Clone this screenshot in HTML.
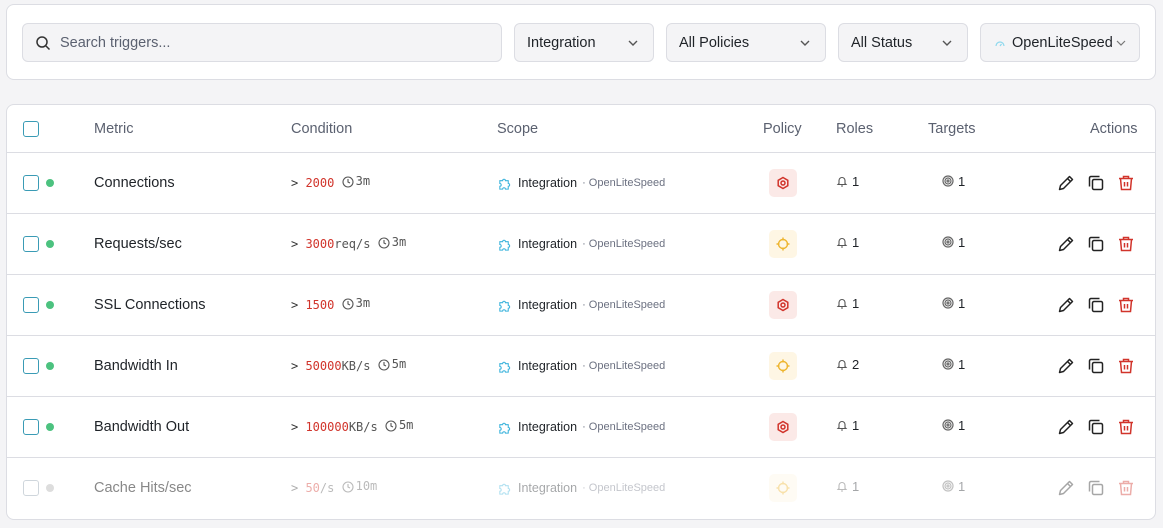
<!DOCTYPE html>
<html><head><style>
*{box-sizing:border-box;margin:0;padding:0}
body{width:1163px;height:528px;background:#f4f4f6;font-family:"Liberation Sans",sans-serif;color:#1f2328;position:relative;overflow:hidden}
svg{flex-shrink:0;display:block}
.card{position:absolute;left:6px;width:1150px;background:#fff;border:1px solid #dcdde3;border-radius:8px}
.f{position:absolute;top:23px;height:39px;background:#f4f4f6;border:1px solid #dcdde3;border-radius:6px;font-size:14.5px;display:flex;align-items:center;padding-left:12px;color:#1f2328}
.chev{position:absolute;right:14px;top:14px}
.row{position:absolute;left:0;width:1148px;height:61px;border-top:1px solid #dcdde3}
.a{position:absolute;top:0;height:100%;display:flex;align-items:center}
.cb{width:16px;height:16px;border:1.5px solid #3a9bb5;border-radius:3px}
.dot{width:8px;height:8px;border-radius:50%;background:#4cc27f}
.th{position:absolute;top:0;height:47px;display:flex;align-items:center;font-size:14.5px;color:#5b6170}
.mono{font-family:"DejaVu Sans Mono",monospace;font-size:12px}
.red{color:#d1342b}
.sub{font-size:11px;color:#6b7080;margin-left:5px}
.badge{width:28px;height:28px;border-radius:5px;display:flex;align-items:center;justify-content:center}
.dim{opacity:.4}
</style></head><body>
<div class="card" style="top:4px;height:76px"></div>
<div class="f" style="left:22px;width:480px;color:#5b6170"><svg width="16" height="16" viewBox="0 0 16 16" fill="none" stroke="#333" stroke-width="1.5" style="margin-right:9px"><circle cx="7" cy="7" r="5"/><path d="M11 11l3.5 3.5"/></svg>Search triggers...</div>
<div class="f" style="left:514px;width:140px">Integration<svg class="chev" width="12" height="10" viewBox="0 0 12 10" fill="none" stroke="#555" stroke-width="1.4"><path d="M2 3l4 4 4-4"/></svg></div>
<div class="f" style="left:666px;width:160px">All Policies<svg class="chev" width="12" height="10" viewBox="0 0 12 10" fill="none" stroke="#555" stroke-width="1.4"><path d="M2 3l4 4 4-4"/></svg></div>
<div class="f" style="left:838px;width:130px">All Status<svg class="chev" width="12" height="10" viewBox="0 0 12 10" fill="none" stroke="#555" stroke-width="1.4"><path d="M2 3l4 4 4-4"/></svg></div>
<div class="f" style="left:980px;width:160px;padding-left:14px"><svg width="10" height="8" viewBox="0 0 10 8" fill="none" stroke="#8ed8ee" stroke-width="1.2" style="margin-right:7px"><path d="M1 7a4 4 0 0 1 8 0M5 7l1.5-2"/></svg>OpenLiteSpeed<svg style="position:absolute;right:12px;top:14px" width="12" height="10" viewBox="0 0 12 10" fill="none" stroke="#777" stroke-width="1.2"><path d="M2 3l4 4 4-4"/></svg></div>

<div class="card" style="top:104px;height:416px">
<div class="th" style="left:16px"><div class="cb"></div></div>
<div class="th" style="left:87px">Metric</div>
<div class="th" style="left:284px">Condition</div>
<div class="th" style="left:490px">Scope</div>
<div class="th" style="left:756px">Policy</div>
<div class="th" style="left:829px">Roles</div>
<div class="th" style="left:921px">Targets</div>
<div class="th" style="left:1083px">Actions</div>
<div id="rows"></div>
</div>
<script>
const R=[["Connections","2000","","3m","r","1"],["Requests/sec","3000","req/s","3m","y","1"],["SSL Connections","1500","","3m","r","1"],["Bandwidth In","50000","KB/s","5m","y","2"],["Bandwidth Out","100000","KB/s","5m","r","1"],["Cache Hits/sec","50","/s","10m","y","1"]];
let h="";
R.forEach((r,i)=>{const last=i==5;const d=last?' dim':'';
const badge=r[4]=="r"?`<div class="badge${d}" style="background:#fbe9e7"><svg width="14" height="14" viewBox="0 0 14 14" fill="none" stroke="#d1342b" stroke-width="1.5"><path d="M7 1.5l4.8 2.8v5.4L7 12.5 2.2 9.7V4.3z"/><circle cx="7" cy="7" r="2"/></svg></div>`:`<div class="badge${d}" style="background:#fef6e4"><svg width="14" height="14" viewBox="0 0 14 14" fill="none" stroke="#eeb52f" stroke-width="1.4"><circle cx="7" cy="7" r="4.5"/><path d="M7 0.5v3M7 10.5v3M0.5 7h3M10.5 7h3"/></svg></div>`;
h+=`<div class="row" style="top:${47+i*61}px">
<div class="a" style="left:16px"><div class="cb" style="${last?'border-color:#cfd6dc':''}"></div></div>
<div class="a" style="left:39px"><div class="dot" style="${last?'background:#ddd':''}"></div></div>
<div class="a" style="left:87px;font-size:14.5px;color:${last?'#888':'#1f2328'}">${r[0]}</div>
<div class="a mono${d}" style="left:284px;color:#333">&gt;&nbsp;<span class="red">${r[1]}</span><span style="color:#555">${r[2]}</span>&nbsp;<svg width="12" height="12" viewBox="0 0 12 12" fill="none" stroke="#555" stroke-width="1.1" style="margin-top:-3px"><circle cx="6" cy="6" r="5"/><path d="M6 3v3l2 1"/></svg><span style="color:#555;margin-left:2px;margin-top:-4px">${r[3]}</span></div>
<div class="a${d}" style="left:490px;font-size:12.5px"><svg width="15" height="15" viewBox="0 0 16 16" fill="none" stroke="#3bb3dc" stroke-width="1.1"><path d="M3 5h3a1.5 1.5 0 1 1 3 0h3v3a1.5 1.5 0 1 1 0 3v3H9a1.5 1.5 0 1 0-3 0H3v-3a1.5 1.5 0 1 0 0-3z"/></svg><span style="margin-left:6px">Integration</span><span class="sub">· OpenLiteSpeed</span></div>
<div class="a" style="left:762px">${badge}</div>
<div class="a${d}" style="left:829px;font-size:13px;margin-top:-2px"><svg width="12" height="12" viewBox="0 0 12 12" fill="none" stroke="#555" stroke-width="1.1"><path d="M3 8.5V5.5a3 3 0 0 1 6 0v3l1 1H2zM5 11h2"/></svg><span style="margin-left:4px">${r[5]}</span></div>
<div class="a${d}" style="left:935px;font-size:13px;margin-top:-2px"><svg width="12" height="12" viewBox="0 0 12 12" fill="none" stroke="#666" stroke-width="1.2"><circle cx="6" cy="6" r="5"/><circle cx="6" cy="6" r="3"/><circle cx="6" cy="6" r="1"/></svg><span style="margin-left:4px">1</span></div>
<div class="a${d}" style="left:1050px"><svg width="18" height="18" viewBox="0 0 18 18" fill="none" stroke="#222" stroke-width="1.5" stroke-linejoin="round"><path d="M2.5 15.5l1-4 9-9 3 3-9 9zM10.5 4.5l3 3"/></svg></div>
<div class="a${d}" style="left:1080px"><svg width="18" height="18" viewBox="0 0 18 18" fill="none" stroke="#222" stroke-width="1.5"><rect x="5.5" y="5.5" width="10" height="10" rx="1.5"/><path d="M2.5 12.5V4A1.5 1.5 0 0 1 4 2.5h8.5"/></svg></div>
<div class="a${d}" style="left:1110px"><svg width="18" height="18" viewBox="0 0 18 18" fill="none" stroke="#d1342b" stroke-width="1.5"><path d="M2 4.5h14M6.5 4.5V2.5h5v2M3.5 4.5l1 11h9l1-11M7.5 8v4.5M10.5 8v4.5"/></svg></div>
</div>`});
document.getElementById("rows").innerHTML=h;
</script>
</body></html>
